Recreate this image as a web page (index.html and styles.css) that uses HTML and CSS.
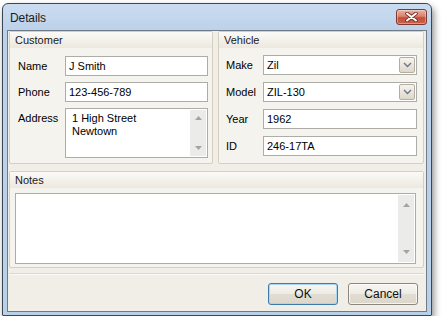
FILE: index.html
```html
<!DOCTYPE html>
<html>
<head>
<meta charset="utf-8">
<link rel="stylesheet" href="styles.css">
</head>
<body>
<div class="window">
  <div class="titlebar">
    <span class="title">Details</span>
    <div class="close">
      <svg width="13" height="10" viewBox="0 0 13 10"><path d="M2 1.5 L11 8.5 M11 1.5 L2 8.5" stroke="#7a2a22" stroke-width="3.6" stroke-linecap="round"/><path d="M2 1.5 L11 8.5 M11 1.5 L2 8.5" stroke="#fff" stroke-width="2" stroke-linecap="round"/></svg>
    </div>
  </div>
  <div class="client">
    <div class="top-row">
      <div class="group customer">
        <div class="group-head">Customer</div>
        <div class="group-body form">
          <span class="lbl">Name</span><div class="field">J Smith</div>
          <span class="lbl">Phone</span><div class="field">123-456-789</div>
          <span class="lbl">Address</span>
          <div class="field memo address">
            <div class="memo-text">1 High Street<br>Newtown</div>
            <div class="vscroll">
              <svg width="7" height="4" viewBox="0 0 7 4"><path d="M0 4 L3.5 0 L7 4Z" fill="#a4a4a4"/></svg>
              <svg width="7" height="4" viewBox="0 0 7 4"><path d="M0 0 L3.5 4 L7 0Z" fill="#a4a4a4"/></svg>
            </div>
          </div>
        </div>
      </div>
      <div class="group vehicle">
        <div class="group-head">Vehicle</div>
        <div class="group-body form">
          <span class="lbl">Make</span>
          <div class="field combo"><span>Zil</span><div class="drop"><svg width="9" height="6" viewBox="0 0 9 6"><path d="M1 1 L4.5 4.5 L8 1" fill="none" stroke="#6d7687" stroke-width="1.4"/></svg></div></div>
          <span class="lbl">Model</span>
          <div class="field combo"><span>ZIL-130</span><div class="drop"><svg width="9" height="6" viewBox="0 0 9 6"><path d="M1 1 L4.5 4.5 L8 1" fill="none" stroke="#6d7687" stroke-width="1.4"/></svg></div></div>
          <span class="lbl">Year</span><div class="field">1962</div>
          <span class="lbl">ID</span><div class="field">246-17TA</div>
        </div>
      </div>
    </div>
    <div class="group notes">
      <div class="group-head">Notes</div>
      <div class="group-body">
        <div class="field memo notes-area">
          <div class="memo-text"></div>
          <div class="vscroll">
            <svg width="7" height="4" viewBox="0 0 7 4"><path d="M0 4 L3.5 0 L7 4Z" fill="#a4a4a4"/></svg>
            <svg width="7" height="4" viewBox="0 0 7 4"><path d="M0 0 L3.5 4 L7 0Z" fill="#a4a4a4"/></svg>
          </div>
        </div>
      </div>
    </div>
    <div class="footer">
      <div class="btn default">OK</div>
      <div class="btn">Cancel</div>
    </div>
  </div>
</div>
</body>
</html>
```
FILE: styles.css
```css
html, body {
  margin: 0;
  padding: 0;
  background: #ffffff;
}
body {
  padding: 3px 0 0 2px;
  font-family: "Liberation Sans", Arial, sans-serif;
  font-size: 11px;
  color: #000;
}
.window {
  width: 420px;
  height: 308px;
  padding: 0 4px 3px 4px;
  border: 1px solid #3b4653;
  border-radius: 6px 6px 1px 1px;
  background: linear-gradient(#cadcf0 0px, #bcd2ea 26px, #b9d0e9 100%);
  box-shadow: 2px 4px 7px rgba(0,0,0,0.45);
  display: flex;
  flex-direction: column;
}
.titlebar {
  height: 26px;
  flex-shrink: 0;
  display: flex;
  align-items: flex-start;
  justify-content: space-between;
}
.title {
  font-size: 12px;
  color: #1b1b1b;
  margin: 7px 0 0 3px;
  letter-spacing: -0.1px;
}
.close {
  width: 29px;
  height: 14px;
  margin-top: 5px;
  border: 1px solid #7e3a31;
  border-radius: 3px;
  background: linear-gradient(#eab2a5 0%, #d9826f 45%, #c4503c 55%, #c9604b 100%);
  box-shadow: inset 0 0 0 1px rgba(255,255,255,0.35);
  display: flex;
  align-items: center;
  justify-content: center;
}
.client {
  flex: 1;
  min-height: 0;
  border: 1px solid #707b88;
  background: #f1eee8;
  padding: 0 2px 0 1px;
  display: flex;
  flex-direction: column;
}
.top-row {
  display: flex;
  gap: 5px;
  flex-shrink: 0;
}
.group {
  border: 1px solid #d5cfc2;
  border-radius: 2px;
  background: #f5f3ee;
  flex-shrink: 0;
}
.customer { width: 202px; }
.vehicle { width: 204px; }
.group-head {
  height: 16px;
  line-height: 16px;
  padding-left: 5px;
  background: linear-gradient(#fbfaf7, #ece8df);
  color: #1a1a1a;
}
.form {
  display: grid;
  align-items: start;
}
.customer .form {
  grid-template-columns: 47px 142px;
  row-gap: 6px;
  padding: 8px 5px 5px 8px;
}
.vehicle .form {
  grid-template-columns: 37px 153px;
  row-gap: 7px;
  padding: 7px 7px 7px 7px;
}
.lbl {
  line-height: 20px;
}
.field {
  height: 18px;
  line-height: 18px;
  border: 1px solid #aeaca6;
  background: #fff;
  padding-left: 3px;
  box-sizing: content-box;
}
.customer .field { width: 138px; }
.vehicle .field { width: 149px; }
.combo {
  display: flex;
  justify-content: space-between;
}
.drop {
  width: 14px;
  height: 14px;
  margin: 1px 1px 0 0;
  border: 1px solid #b5ae9f;
  border-radius: 2px;
  background: linear-gradient(#f6f4ef, #ddd7cb);
  display: flex;
  align-items: center;
  justify-content: center;
}
.memo {
  display: flex;
  padding-left: 0;
}
.customer .memo { width: 141px; height: 48px; }
.memo-text {
  flex: 1;
  padding: 3px 0 0 6px;
  line-height: 13px;
}
.vscroll {
  width: 16px;
  margin: 1px 1px 1px 0;
  background: #ebebe9;
  display: flex;
  flex-direction: column;
  align-items: center;
  justify-content: space-between;
  padding: 6px 0 6px;
}
.notes .group-body {
  padding: 5px 7px 3px 5px;
}
.notes {
  margin-top: 7px;
}
.notes-area {
  width: 399px;
  height: 69px;
}
.notes-area .vscroll {
  padding: 8px 0 8px;
}
.footer {
  flex: 1;
  margin-top: 5px;
  border-top: 1px solid #dcd7cc;
  box-shadow: inset 0 1px 0 #fbfaf8;
  display: flex;
  justify-content: flex-end;
  align-items: flex-start;
  gap: 10px;
  padding: 9px 6px 0 0;
}
.btn {
  width: 68px;
  height: 20px;
  line-height: 20px;
  text-align: center;
  font-size: 12px;
  border: 1px solid #8b877e;
  border-radius: 3px;
  background: linear-gradient(#f7f6f2 0%, #eeebe4 50%, #e2ddd2 51%, #dcd6ca 100%);
  box-shadow: inset 0 0 0 1px rgba(255,255,255,0.7);
  color: #111;
}
.btn.default {
  border-color: #3d7bad;
  box-shadow: inset 0 0 0 1px #a9d6f3;
}
```
